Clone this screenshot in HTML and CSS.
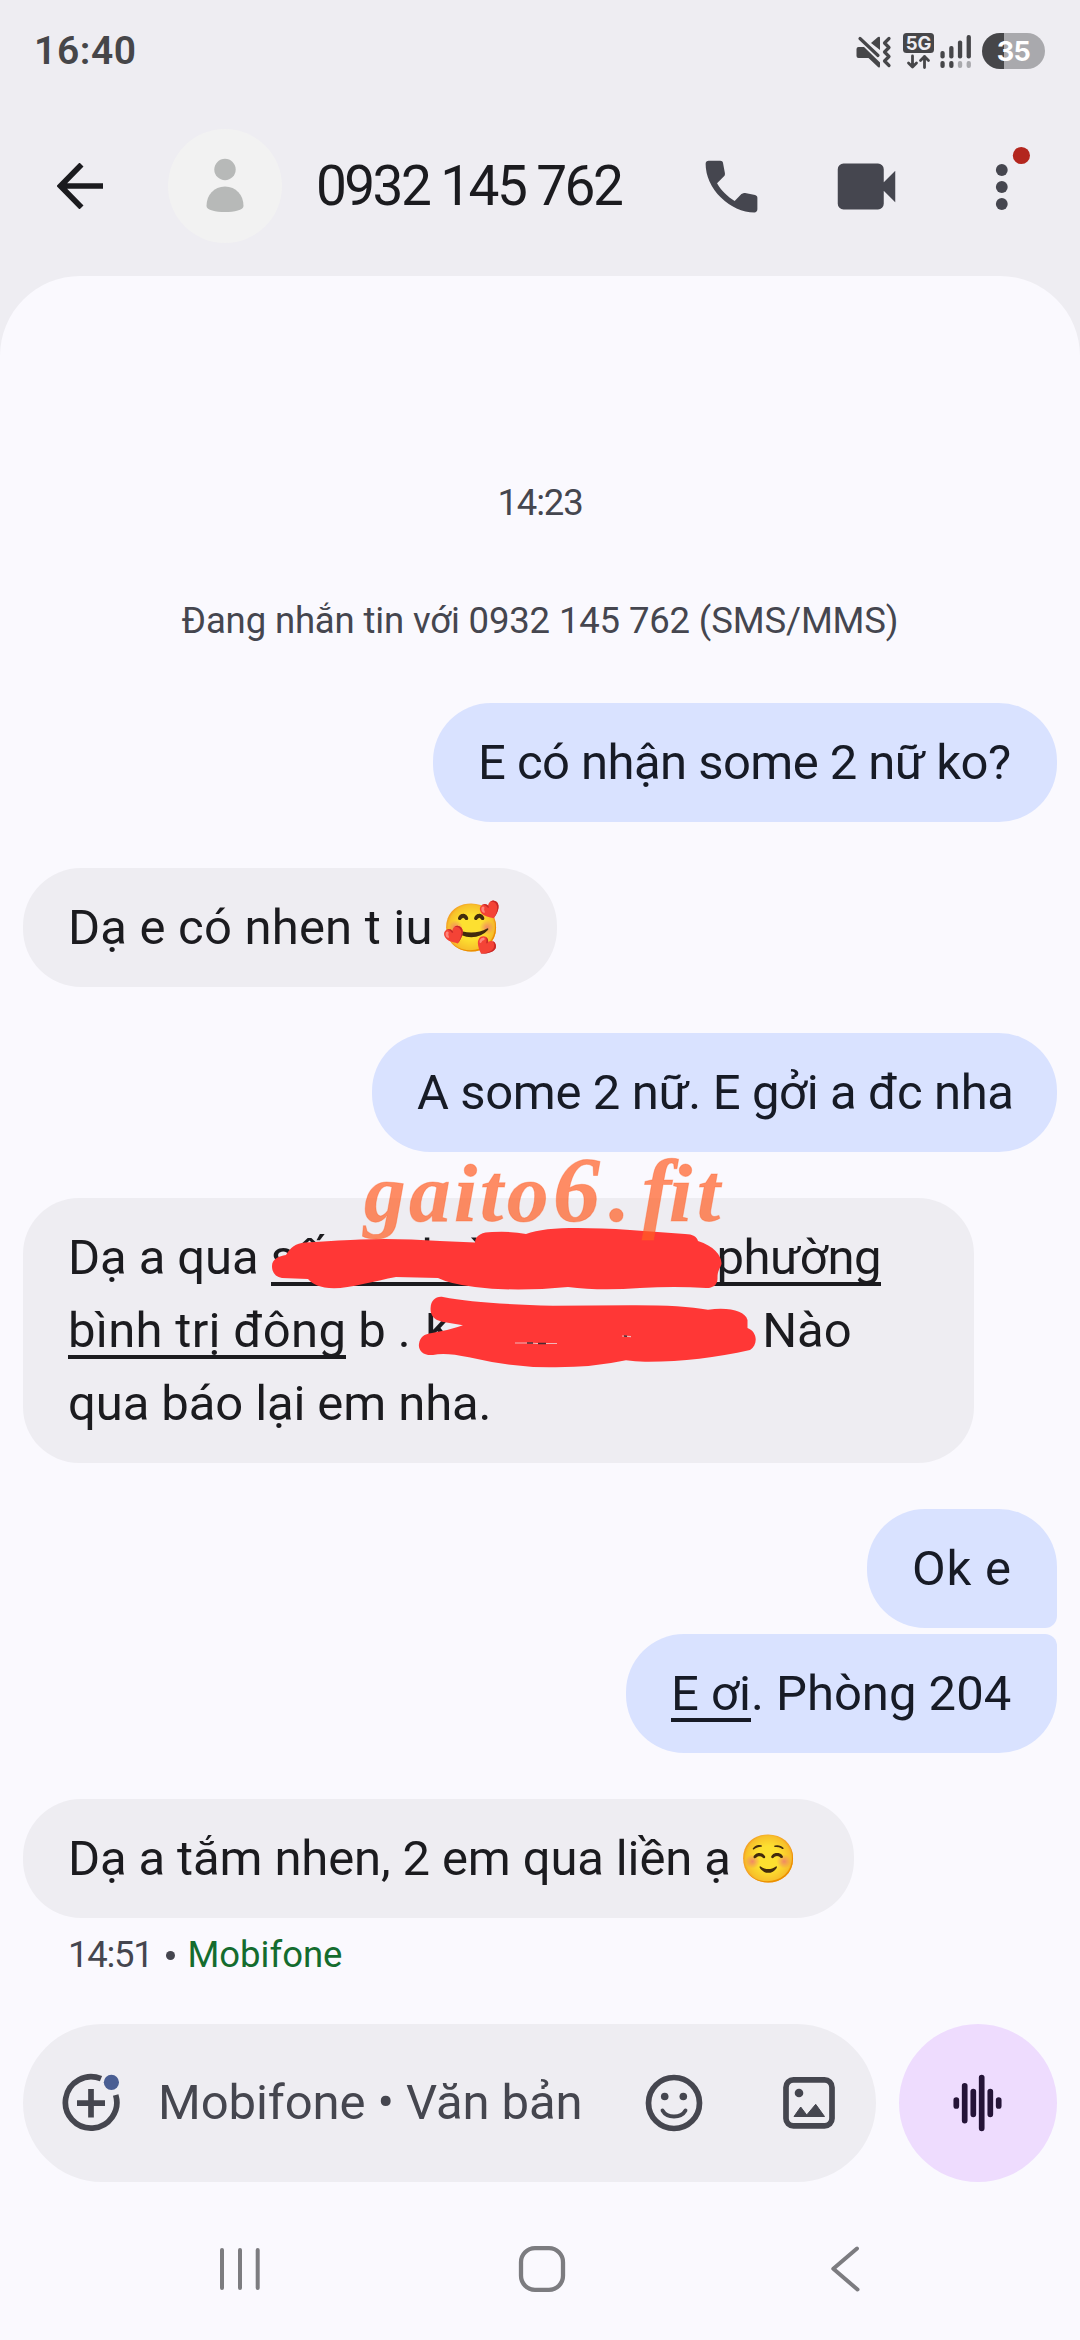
FILE: index.html
```html
<!DOCTYPE html>
<html lang="vi">
<head>
<meta charset="utf-8">
<title>0932 145 762</title>
<link rel="stylesheet" href="styles.css">
</head>
<body>
<div class="screen">
  <div class="status">
    <span class="clock">16:40</span>
    <div class="status-icons">
      <svg class="sys" width="120" height="40" viewBox="855 30 120 40">
        <g fill="#464649">
          <path d="M858.5 46h5.500l16 15.500v3.500q0 2.500-2 1l-9.500-9h-10q-2 0-2-2v-7q0-2 2-2z"/>
          <path d="M871 42l7-6q2-1 2 1v12z"/>
          <rect x="903" y="32" width="31" height="20" rx="3.500"/>
          <rect x="940.400" y="50" width="4.300" height="7.500" rx="2"/>
          <rect x="949.200" y="45" width="4.300" height="12.500" rx="2"/>
          <rect x="957.900" y="39.500" width="4.300" height="18" rx="2"/>
          <rect x="966.600" y="34" width="4.300" height="23.500" rx="2"/>
          <rect x="940.400" y="60" width="4.300" height="7" rx="2"/>
          <rect x="949.200" y="60" width="4.300" height="7" rx="2"/>
        </g>
        <g fill="#a9a9ad">
          <rect x="957.900" y="60" width="4.300" height="7" rx="2"/>
          <rect x="966.600" y="60" width="4.300" height="7" rx="2"/>
        </g>
        <g fill="none" stroke="#464649" stroke-linecap="round" stroke-linejoin="round">
          <path stroke-width="3.200" d="M860 37.500l18 17"/>
          <path stroke-width="3.200" d="M889 37.500l-4.500 4.500 4.500 4.500-4.500 4.500 4.500 4.500-4.500 4.500 4.500 4.500"/>
          <path stroke-width="2.800" d="M912.500 55v11m-4-4l4 4 4-4M924.500 66.500v-11m-4 4l4-4 4 4"/>
        </g>
        <text class="net" x="918.500" y="49">5G</text>
      </svg>
      <span class="battery">35</span>
    </div>
  </div>

  <div class="header">
    <svg class="back" width="46" height="46" viewBox="0 0 46 46"><path d="M46 23H4M24.500 1.500L3.500 23l21 21.500" fill="none" stroke="#1b1b1f" stroke-width="5.600"/></svg>
    <svg class="avatar" width="114" height="114" viewBox="0 0 114 114"><circle cx="57" cy="57" r="57" fill="#f2f2f2"/><circle cx="57" cy="40.500" r="10.700" fill="#b7b9b8"/><path d="M38.500 77C38.500 66 46 57.500 57 57.500S75.500 66 75.500 77C75.500 85 38.500 85 38.500 77z" fill="#b7b9b8"/></svg>
    <span class="name">0932 145 762</span>
    <svg class="act call" width="69" height="69" viewBox="0 0 24 24"><path d="M19.950 21q-3.125 0-6.175-1.3625T8.225 15.775 4.3625 10.225 3 4.050q0-.45.3-.75t.75-.3H8.100q.35 0 .625.2375T9.050 3.800l.65 3.500q.05.4-.025.675T9.400 8.450L6.975 10.900q.5.925 1.1875 1.7875T9.675 14.350q.775.775 1.625 1.4375T13.100 17l2.350-2.350q.225-.225.5875-.3375t.7125-.0625l3.450.7q.35.1.575.3625T21 15.900v4.050q0 .45-.3.75t-.75.3Z"/></svg>
    <svg class="act video" width="69" height="69" viewBox="0 0 24 24"><path d="M4 20q-.825 0-1.4125-.5875T2 18V6q0-.825.5875-1.4125T4 4h12q.825 0 1.4125.5875T18 6v4.500l4-4v11l-4-4V18q0 .825-.5875 1.4125T16 20H4Z"/></svg>
    <svg class="more" width="40" height="80" viewBox="990 140 40 80"><g fill="#45464f"><circle cx="1001.800" cy="169" r="5.900"/><circle cx="1001.800" cy="186" r="5.900"/><circle cx="1001.800" cy="203" r="5.900"/></g><circle cx="1021.400" cy="154.500" r="8.600" fill="#b3261e"/></svg>
  </div>

  <div class="sheet">
    <div class="time">14:23</div>
    <div class="notice">Đang nhắn tin với 0932 145 762 (SMS/MMS)</div>
    <div class="thread">
      <div class="bubble out m1">E có nhận some 2 nữ ko?</div>
      <div class="bubble in m2">Dạ e có nhen t iu <span class="emoji">🥰</span></div>
      <div class="bubble out m3">A some 2 nữ. E gởi a đc nha</div>
      <div class="bubble in m4">
        Dạ a qua <span class="link">số<span class="gap g1">h</span><span class="gap g2">ờ</span><span class="gap g3">phường</span></span><br>
        <span class="link l2">bình trị đông</span> b .<span class="gap g4">K</span><span class="gap g5">Nào</span><br>
        qua báo lại em nha.
        <svg class="scribble" width="520" height="190" viewBox="400 1200 520 190"><path fill="#ff3736" transform="translate(145 0)" d="M272 1266C272 1259 279 1256 286 1255C290 1248 296 1243 305 1242.500Q344 1240 360 1239.500Q396 1238 440 1241L475 1242.500C475 1235 483 1232 492 1232Q512 1231 526 1234C545 1227 580 1227 630 1230L685 1234C693 1234 697 1237 698 1241C714 1246 722 1256 721.500 1264C720 1269 717.500 1270 717.500 1278C718 1286 711 1288.500 706 1288Q675 1286 640 1288Q600 1291 568 1287Q515 1292 475 1287Q450 1284 438 1278L396 1277C375 1281 350 1288 334 1288.300C320 1288 312 1284 308 1279L282 1278C276 1277 272 1273 272 1266Z"/><path fill="#ff3736" transform="translate(145 0)" d="M430.600 1308C431 1300 436 1296 443 1297Q480 1304 553 1305.700L630 1305.300Q680 1305 708 1309.700C730 1307 745 1311 747.500 1320V1328C758 1332 758 1345 750 1350C715 1358 680 1362 645 1361.700Q635 1361.500 626 1360.300Q590 1368 549 1367.300Q510 1367 469 1357.300Q445 1352 433 1355C423 1356 418 1350 419 1344C420 1337 424 1334 432 1333Q450 1330 463 1325.300L442 1321.700C434 1320 430 1315 430.600 1308Z"/><g transform="translate(145 0)" fill="none"><path stroke="#f0b6b8" stroke-width="1.200" d="M515 1343h14l8 .5h20M622 1336l9 .7"/><path stroke="#4a2a30" stroke-width="1.500" d="M527 1343h6M538 1343.500h8M624 1336l3 .3"/></g></svg>
        <svg class="mark" width="400" height="130" viewBox="350 1145 400 130"><text y="1221" x="364 409 454 480 507">gaito</text><text class="six" y="1221" x="553">6</text><text y="1221" x="609">.</text><text class="eff" y="1221" x="642">f</text><text y="1221" x="669 697">it</text></svg>
      </div>
      <div class="bubble out m5">Ok e</div>
      <div class="bubble out m6"><span class="link">E ơi</span>. Phòng 204</div>
      <div class="bubble in m7">Dạ a tắm nhen, 2 em qua liền ạ <span class="emoji">☺️</span></div>
      <div class="meta"><span class="mt">14:51</span><span class="sep"></span><span class="sim">Mobifone</span></div>
    </div>
    <div class="composer">
      <div class="field">
        <svg class="plus" width="64" height="64" viewBox="59 2071 64 64"><path d="M101 2078.700A25.700 25.700 0 1 0 115.700 2095" fill="none" stroke="#45464f" stroke-width="5.700"/><path d="M91 2089v28.500M77 2103.200h28" stroke="#45464f" stroke-width="5.700"/><circle cx="111.400" cy="2082.300" r="7.600" fill="#4a5e93"/></svg>
        <span class="hint">Mobifone • Văn bản</span>
        <svg class="smile" width="58" height="58" viewBox="645 2074 58 58"><circle cx="674" cy="2103" r="25.500" fill="none" stroke="#45464f" stroke-width="5.700"/><g fill="#45464f"><circle cx="664.700" cy="2096.500" r="3.800"/><circle cx="683.300" cy="2096.500" r="3.800"/></g><path d="M662.500 2110.500C667 2118.500 681 2118.500 685.500 2110.500" fill="none" stroke="#45464f" stroke-width="3.800" stroke-linecap="round"/></svg>
        <svg class="pic" width="52" height="52" viewBox="783 2077 52 52"><rect x="786" y="2079.900" width="46" height="46" rx="7.500" fill="none" stroke="#45464f" stroke-width="5.700"/><g fill="#45464f"><circle cx="799" cy="2093" r="4.300"/><path stroke="#45464f" stroke-width="1" stroke-linejoin="round" d="M794 2116.500L800.700 2107 806.700 2115 815.700 2104.300 824.500 2116.500z"/></g></svg>
      </div>
      <div class="voice"><svg width="50" height="58" viewBox="952 2074 50 58"><path d="M955.300 2100v6M963.700 2085.800v34.800M972.300 2091.500v22.800M980.700 2077.500v50.800M989.300 2091.500v22.800M997.700 2100v6" stroke="#251438" stroke-width="5.700" stroke-linecap="round"/></svg></div>
    </div>
    <div class="nav">
      <svg width="1080" height="60" viewBox="0 2239 1080 60"><g fill="none" stroke="#7c7c80" stroke-width="4" stroke-linecap="round" stroke-linejoin="round"><path d="M222 2250v38M240 2250v38M257.700 2250v38"/><rect x="521" y="2248.200" width="42" height="41.600" rx="14" stroke-width="4.300"/><path d="M857 2248.500L833.300 2268.700 857.500 2289.500"/></g></svg>
    </div>
  </div>
</div>
</body>
</html>
```
FILE: styles.css
```css
* { box-sizing: border-box; }
body { margin: 0; background: #eeedf2; font-family: Roboto, sans-serif; color: #1b1b1f; }
svg { display: block; }
.screen { width: 1080px; height: 2340px; display: flex; flex-direction: column; background: #eeedf2; overflow: hidden; }

.status { height: 101px; padding: 0 35px 0 34px; display: flex; justify-content: space-between; align-items: center; }
.clock { font-size: 39px; line-height: 44px; font-weight: 600; color: #464649; letter-spacing: 0.6px; padding-top: 1px; }
.status-icons { display: flex; align-items: center; }
.sys { margin: 0 7px 0 0; }
.net { font: 700 18.5px Inter, sans-serif; fill: #eeedf2; text-anchor: middle; }
.battery { width: 63px; height: 36px; border-radius: 18px; background: linear-gradient(90deg, #464649 22px, #a9a9ad 22px); color: #fff; font: 700 27px/37px Inter, sans-serif; text-align: center; letter-spacing: -0.5px; }

.header { height: 175px; display: flex; align-items: center; padding: 0 48px 5px 57px; }
.avatar { margin-left: 65px; }
.name { margin-left: 34px; width: 381px; font-size: 55px; line-height: 70px; letter-spacing: -2.6px; white-space: nowrap; }
.act { fill: #45464f; flex: none; }
.video { margin-left: 66px; }
.more { margin-left: 89px; margin-top: -11px; flex: none; }

.sheet { flex: 1; background: #faf9fe; border-radius: 80px 80px 0 0; display: flex; flex-direction: column; }
.time, .notice { text-align: center; color: #45464f; font-size: 36.5px; line-height: 44px; }
.time { margin-top: 205px; letter-spacing: -1.2px; }
.notice { margin-top: 74px; letter-spacing: -0.15px; }

.thread { margin-top: 60px; padding: 0 23px; display: flex; flex-direction: column; align-items: flex-start; gap: 46px; }
.bubble { position: relative; padding: 23px 45px; border-radius: 58px; font-size: 49px; line-height: 73px; white-space: nowrap; }
.in { background: #eeedf2; }
.out { background: #d9e2ff; align-self: flex-end; color: #171b26; }
.m1 { width: 624px; letter-spacing: -0.55px; }
.m2 { width: 534px; letter-spacing: 0.2px; }
.m3 { width: 685px; letter-spacing: -0.38px; }
.m4 { width: 951px; border-radius: 56px; letter-spacing: -0.1px; }
.m5 { width: 190px; letter-spacing: 0.8px; border-bottom-right-radius: 12px; }
.m6 { width: 431px; margin-top: -40px; border-top-right-radius: 12px; }
.m7 { width: 831px; letter-spacing: -0.13px; }
.emoji { font-size: 47px; font-family: "Noto Color Emoji", sans-serif; line-height: 1; letter-spacing: 0; margin-left: -3px; }
.link { background: linear-gradient(currentColor, currentColor) left bottom / 100% 4.500px no-repeat; }
.l2 { letter-spacing: 0.3px; }
.gap { display: inline-block; }
.g1 { margin-left: 98px; }
.g2 { margin-left: 16px; }
.g3 { margin-left: 224px; letter-spacing: -0.45px; }
.g4 { margin-left: 14px; }
.g5 { margin-left: 307px; }
.scribble { position: absolute; left: 232px; top: 2px; }
.mark { position: absolute; left: 327px; top: -53px; overflow: visible; }
.mark text { font: italic 700 83px "Liberation Serif", serif; fill: #ff5e24; fill-opacity: 0.7; stroke: #ff5e24; stroke-opacity: 0.35; stroke-width: 1px; }
.mark .six { font-size: 94px; }
.mark .eff { font-size: 88px; }

.meta { margin-top: -31px; padding-left: 45px; height: 43px; display: flex; align-items: center; font-size: 36.5px; line-height: 42px; color: #45464f; }
.mt { letter-spacing: -1.3px; }
.sep { width: 9px; height: 9px; border-radius: 50%; background: #45464f; margin: 2px 12px 0 14px; }
.sim { color: #146c2e; letter-spacing: 0; }

.composer { margin-top: 48px; padding: 0 23px; display: flex; justify-content: space-between; }
.field { width: 853px; height: 158px; border-radius: 79px; background: #eeedf2; display: flex; align-items: center; padding: 0 41px 0 36px; }
.hint { margin-left: 35px; width: 487px; font-size: 49px; line-height: 70px; color: #45464f; white-space: nowrap; letter-spacing: -0.1px; }
.pic { margin-left: auto; }
.voice { width: 158px; height: 158px; border-radius: 50%; background: #eedcfe; display: flex; align-items: center; justify-content: center; }
.nav { margin-top: 57px; }
```
